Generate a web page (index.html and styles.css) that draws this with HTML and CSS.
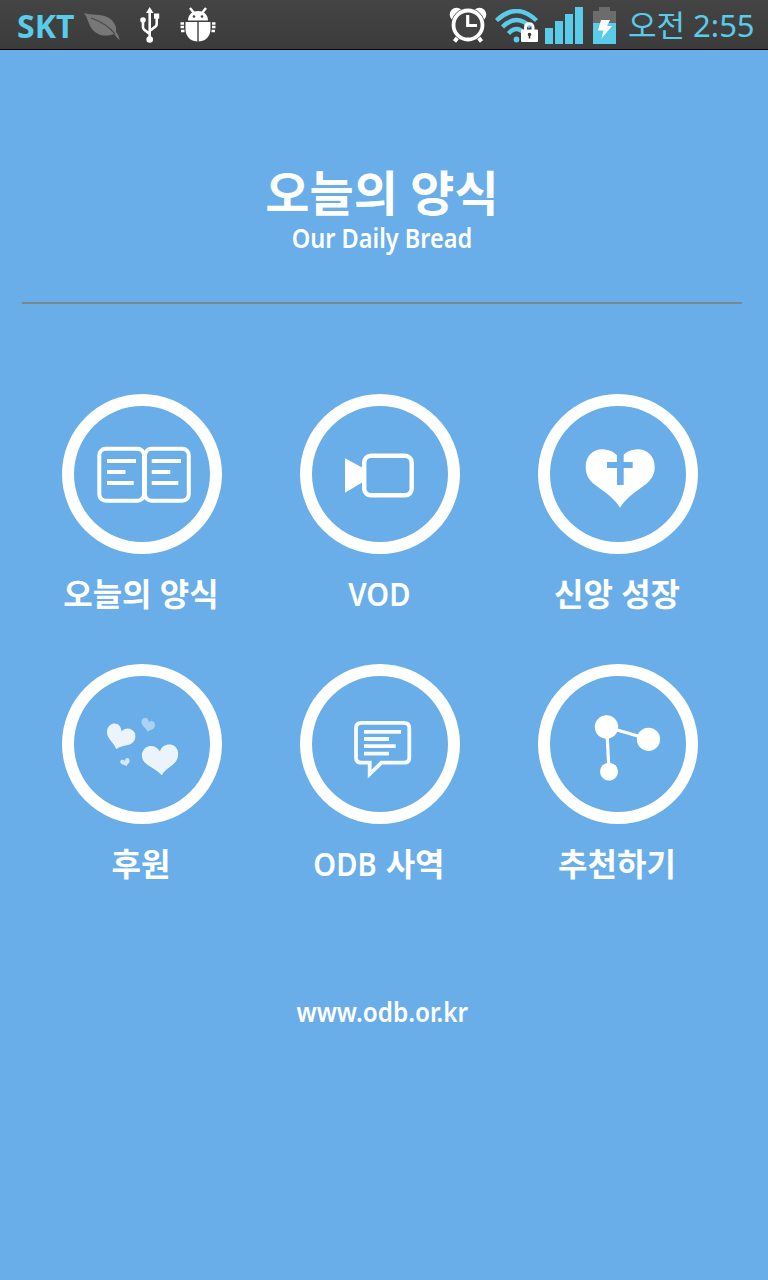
FILE: index.html
```html
<!DOCTYPE html>
<html lang="ko">

<head>
    <meta charset="UTF-8">
    <meta name="viewport" content="width=device-width, initial-scale=1.0">
    <title>오늘의 양식</title>
    <link rel="stylesheet" href="styles.css">
</head>

<body>
    <div class="status_bar">
        <div class="status_left">
            <span class="carrier">SKT</span>
            <svg class="ico_leaf" width="36" height="28" viewBox="0 0 36 28">
                <path d="M0 0C7 3 17 0 25 5C31 9 33 15 32 19C34 21 35 23 35.500 27C34 26 32 23 30 21C21 24 14 23 8 16C4 11 4 5 0 0Z" fill="#777" />
                <path d="M7 5C16 8 24 12 31 21" fill="none" stroke="#484848" stroke-width="1.200" />
            </svg>
            <svg class="ico_usb" width="20" height="36" viewBox="0 0 20 36">
                <path d="M9.700 5V32M9.700 27L4 22.500Q3 21.500 3 20V14M9.700 24L15.500 19.500Q16.700 18.500 16.700 17V10" fill="none" stroke="#fff" stroke-width="2.600" />
                <path d="M9.700 0L13.500 6H6Z" fill="#fff" />
                <circle cx="3" cy="13" r="2.800" fill="#fff" />
                <circle cx="9.700" cy="32.500" r="3.300" fill="#fff" />
                <rect x="14" y="6.500" width="5.200" height="5.200" fill="#fff" />
            </svg>
            <svg class="ico_bug" width="36" height="36" viewBox="0 0 36 36" fill="#fff">
                <path d="M10 1L14 6M26 1L22 6" stroke="#fff" stroke-width="2.400" />
                <path d="M8 13.500C8 7 13 4 18 4S28 7 28 13.500Z" />
                <path d="M5.500 15H17.300V34.500C9 34 5.500 28 5.500 22ZM18.700 15H30.500V22C30.500 28 27 34 18.700 34.500Z" />
                <path d="M0.500 16.500H4M0.500 20H4M1 24H4.500M32 16.500H35.500M32 20H35.500M31.500 24H35" stroke="#fff" stroke-width="2.600" />
                <circle cx="14" cy="9.500" r="1.300" fill="#444" />
                <circle cx="22" cy="9.500" r="1.300" fill="#444" />
            </svg>
        </div>
        <div class="status_right">
            <svg class="ico_alarm" width="38" height="36" viewBox="0 0 38 36">
                <circle cx="7.500" cy="7.500" r="6.800" fill="#fff" />
                <circle cx="30.500" cy="7.500" r="6.800" fill="#fff" />
                <path d="M9 30L5.500 34.500M29 30L32.500 34.500" stroke="#fff" stroke-width="4" />
                <circle cx="19" cy="18" r="17" fill="#434343" />
                <circle cx="19" cy="18" r="14.500" fill="#434343" stroke="#fff" stroke-width="3.800" />
                <path d="M18.700 8V18.500H28" fill="none" stroke="#fff" stroke-width="3.200" />
            </svg>
            <svg class="ico_wifi" width="44" height="34" viewBox="0 0 44 34">
                <path d="M1.500 11.500Q21.500 -7.500 41.500 11.500M7.500 18Q21.500 4 35.500 18M13.500 24.500Q21.500 15.500 29.500 24.500" fill="none" stroke="#5acbe8" stroke-width="4.400" />
                <circle cx="21.500" cy="30.500" r="2.900" fill="#5acbe8" />
                <path d="M30.500 22V18.500Q30.500 14.800 34.300 14.800T38 18.500V22" fill="none" stroke="#fff" stroke-width="3" />
                <rect x="26" y="20.500" width="17" height="12.500" rx="1" fill="#fff" />
                <path d="M34.500 24.500V29.500" stroke="#333" stroke-width="1.600" />
                <circle cx="34.500" cy="25.500" r="1.700" fill="#333" />
            </svg>
            <svg class="ico_signal" width="38" height="37" viewBox="0 0 38 37" fill="#5acbe8">
                <rect x="0" y="21" width="8" height="16" />
                <rect x="10" y="14" width="8" height="23" />
                <rect x="20" y="7" width="8" height="30" />
                <rect x="30" y="0" width="8" height="37" />
            </svg>
            <svg class="ico_battery" width="23" height="37" viewBox="0 0 23 37">
                <path d="M6 0H17V4H23V16H0V4H6Z" fill="#6c6c6c" />
                <rect x="0" y="16" width="23" height="21" fill="#5acbe8" />
                <path d="M8 13H17L14 19H19L8.500 31.500L10.500 23.500H5Z" fill="#fff" />
            </svg>
            <span class="clock">오전 2:55</span>
        </div>
    </div>
    <!-- // .status_bar -->

    <div class="header">
        <h1 class="title">오늘의 양식</h1>
        <p class="subtitle">Our Daily Bread</p>
    </div>
    <!-- // .header -->

    <div class="menu">
        <a href="#" class="menu_item">
            <span class="menu_circle">
                <svg viewBox="0 0 160 160" fill="none" stroke="#fff" stroke-width="4">
                    <rect x="37.300" y="54.800" width="44.700" height="52" rx="6.500" />
                    <rect x="83" y="54.800" width="43.800" height="52" rx="6.500" />
                    <path d="M45 67H74M45 78H63.500M45 89H71.700M89.700 67H119M89.700 78H108.300M89.700 89H116.300" />
                </svg>
            </span>
            <span class="menu_label">오늘의 양식</span>
        </a>
        <a href="#" class="menu_item">
            <span class="menu_circle">
                <svg viewBox="0 0 160 160">
                    <path d="M45 64.300L63 74V88L45 98.700Z" fill="#fff" />
                    <rect x="64.200" y="61.800" width="47.500" height="39.500" rx="6.500" fill="none" stroke="#fff" stroke-width="4.400" />
                </svg>
            </span>
            <span class="menu_label label_en">VOD</span>
        </a>
        <a href="#" class="menu_item">
            <span class="menu_circle">
                <svg viewBox="0 0 160 160" fill="#fff">
                    <path d="M82 113.700C76 104 68 99 58 91.500C50 86 47.700 80 47.700 73C47.700 62 55 55.300 64 55.300C72 55.300 78 59 82 65C86 59 92 55.300 100 55.300C109 55.300 116.700 62 116.700 73C116.700 80 114 86 106 91.500C96 99 88 104 82 113.700Z" />
                    <path d="M79 58H85.700V68H94.700V74H85.700V91H79V74H69V68H79Z" fill="#69aee8" />
                </svg>
            </span>
            <span class="menu_label">신앙 성장</span>
        </a>
        <a href="#" class="menu_item">
            <span class="menu_circle">
                <svg viewBox="0 0 160 160" fill="#ebf4fc">
                    <path d="M99.700 111.300C96 107 90 104 85 100.500C80 97 79 92 80.500 88C83.500 80 94 80 98 87.500C100 79.500 112 77.500 115.500 86C117.500 92 115 97 111 100.500C106 104.500 102 107 99.700 111.300Z" />
                    <path d="M54.300 85.300C53 81 49 77.500 46.500 73.500C43.500 68 45 62 50 60C55 58.300 59.500 62 59.500 67.500C63 63 70 63.500 72.800 69C75 75 71 80 66 81C61 82 57.500 82.500 54.300 85.300Z" />
                    <path d="M85.700 68C85 65 82 63.500 80.300 61C78.500 57.500 80 54.500 82.500 54C85 53.500 87 55.500 86.800 58.500C89 56 92 57 92.800 60C93.300 63 92 65 89.500 65.700C88 66 87 66.500 85.700 68Z" fill="#a9d2f3" />
                    <path d="M64.700 102.300C63 101 61 101 59.500 100C57.500 98.500 58 96 60 95.700C61.500 95.500 62.700 96 63 97.500C63 95 64 94 65.500 94C67.500 94.300 68 96.500 67.300 98.300C66.500 100 65 100.500 64.700 102.300Z" fill="#d5e9fa" />
                </svg>
            </span>
            <span class="menu_label">후원</span>
        </a>
        <a href="#" class="menu_item">
            <span class="menu_circle">
                <svg viewBox="0 0 160 160" fill="none" stroke="#f8fcff" stroke-width="3.800">
                    <path d="M61.500 58.800H104Q109.300 58.800 109.300 64V93.500Q109.300 98.700 104 98.700H81.500L69.700 110V98.700H61.500Q56 98.700 56 93.500V64Q56 58.800 61.500 58.800Z" />
                    <path d="M64 67.800H101M64 75H89M64 82.200H95.700M64 89.600H89" />
                </svg>
            </span>
            <span class="menu_label"><span class="label_en">ODB</span> 사역</span>
        </a>
        <a href="#" class="menu_item">
            <span class="menu_circle">
                <svg viewBox="0 0 160 160" fill="#fff">
                    <path d="M71 107.700L68.800 63L110.700 75.300" fill="none" stroke="#fff" stroke-width="3.200" />
                    <circle cx="68.500" cy="63" r="11.700" />
                    <circle cx="110.500" cy="75.300" r="11.600" />
                    <circle cx="71" cy="107.700" r="9" />
                </svg>
            </span>
            <span class="menu_label">추천하기</span>
        </a>
    </div>
    <!-- // .menu -->

    <div class="footer">
        <a href="#" class="site_link">www.odb.or.kr</a>
    </div>
</body>

</html>
```
FILE: styles.css
```css
html,
body {
    box-sizing: border-box;
    padding: 0;
    margin: 0;
}

*,
*:before,
*:after {
    box-sizing: inherit;
}

body {
    height: 1280px;
    background: #69aee8;
    font-family: "Noto Sans", "Noto Sans CJK KR", sans-serif;
    color: #fff;
    overflow: hidden;
}

svg {
    display: block;
    flex: none;
}

/* status bar */
.status_bar {
    display: flex;
    justify-content: space-between;
    height: 50px;
    padding: 0 12px 0 17px;
    background: linear-gradient(#444, #3b3b3b);
    border-bottom: 1px solid #000;
}

.status_left,
.status_right {
    display: flex;
    align-items: flex-start;
}

.carrier {
    width: 58px;
    font-size: 32px;
    font-weight: bold;
    line-height: 51px;
    color: #5acbe8;
}

.ico_leaf {
    margin: 13px 0 0 9px;
}

.ico_usb {
    margin: 7px 0 0 20px;
}

.ico_bug {
    margin: 7px 0 0 20px;
}

.ico_alarm {
    margin: 7px 8px 0 0;
}

.ico_wifi {
    margin: 9px 6px 0 0;
}

.ico_signal {
    margin: 7px 10px 0 0;
}

.ico_battery {
    margin: 7px 12px 0 0;
}

.clock {
    width: 128px;
    font-size: 31px;
    line-height: 50px;
    white-space: nowrap;
    color: #5acbe8;
}

/* header */
.header {
    height: 254px;
    margin: 0 26px 0 22px;
    padding-top: 108px;
    border-bottom: 2px solid #7c868e;
    text-align: center;
}

.title {
    margin: 0;
    font-size: 48px;
    line-height: 70px;
}

.subtitle {
    margin: 0;
    font-size: 27px;
    font-weight: 600;
    line-height: 20px;
    transform: scaleX(0.87);
}

/* menu */
.menu {
    display: grid;
    grid-template-columns: repeat(3, 160px);
    grid-auto-rows: 270px;
    column-gap: 78px;
    padding: 90px 0 0 62px;
}

.menu_item {
    display: flex;
    flex-direction: column;
    align-items: center;
    color: #fff;
    text-decoration: none;
}

.menu_circle {
    width: 160px;
    height: 160px;
    border-radius: 50%;
    box-shadow: inset 0 0 0 12px #fff;
}

.menu_label {
    margin-right: 2px;
    font-size: 32px;
    font-weight: bold;
    line-height: 80px;
    white-space: nowrap;
}

.label_en {
    display: inline-block;
    font-size: 33px;
    font-weight: 600;
    transform: scaleX(0.88);
}

.menu_label .label_en {
    margin: 0 -4px;
}

/* footer */
.footer {
    padding: 61px 4px 0 0;
    text-align: center;
}

.site_link {
    display: inline-block;
    font-size: 27px;
    font-weight: 600;
    line-height: 34px;
    color: #fff;
    text-decoration: none;
    transform: scaleX(0.9);
}
```
